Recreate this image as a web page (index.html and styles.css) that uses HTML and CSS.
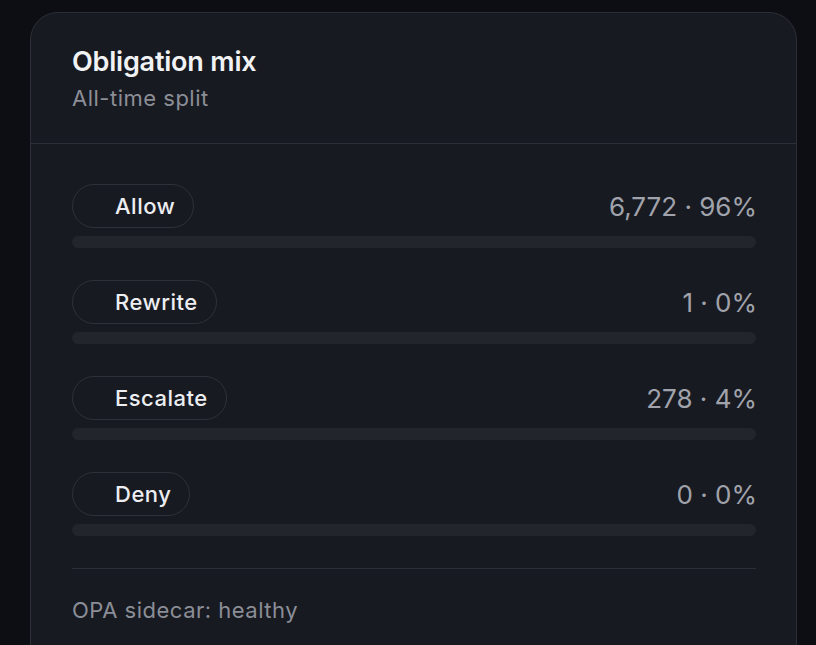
FILE: index.html
```html
<!DOCTYPE html>
<html lang="en">
<head>
  <meta charset="UTF-8" />
  <meta name="viewport" content="width=device-width, initial-scale=1.0"/>
  <title>Obligation mix</title>
  <link rel="stylesheet" href="styles.css">
</head>
<body>
  <div class="card">
    <div class="card-head">
      <h2>Obligation mix</h2>
      <p class="sub">All-time split</p>
    </div>
    <div class="card-body">
      <div class="mix-row">
        <div class="mix-top">
          <span class="pill"><span class="dot"></span>Allow</span>
          <span class="value">6,772 · 96%</span>
        </div>
        <div class="track"><div class="fill" style="width: 96%"></div></div>
      </div>
      <div class="mix-row">
        <div class="mix-top">
          <span class="pill"><span class="dot"></span>Rewrite</span>
          <span class="value">1 · 0%</span>
        </div>
        <div class="track"><div class="fill" style="width: 0%"></div></div>
      </div>
      <div class="mix-row">
        <div class="mix-top">
          <span class="pill"><span class="dot"></span>Escalate</span>
          <span class="value">278 · 4%</span>
        </div>
        <div class="track"><div class="fill" style="width: 4%"></div></div>
      </div>
      <div class="mix-row">
        <div class="mix-top">
          <span class="pill"><span class="dot"></span>Deny</span>
          <span class="value">0 · 0%</span>
        </div>
        <div class="track"><div class="fill" style="width: 0%"></div></div>
      </div>
      <div class="foot">OPA sidecar: healthy</div>
    </div>
  </div>
</body>
</html>
```

FILE: styles.css
```css
body {
  font-family: Inter, "Noto Sans", sans-serif;
  background: #0c0e13;
  margin: 0;
  padding: 12px 0 0 30px;
  overflow: hidden;
}
.card {
  width: 767px;
  box-sizing: border-box;
  background: #181a21;
  border: 1px solid #2c2f37;
  border-radius: 28px;
  min-height: 700px;
}
.card-head {
  padding: 32px 41px 31px;
  border-bottom: 1px solid #2c2f37;
}
.card-head h2 {
  margin: 0;
  font-size: 27px;
  line-height: 34px;
  font-weight: 600;
  color: #f1f2f4;
  letter-spacing: -0.2px;
}
.sub {
  margin: 5px 0 0;
  font-size: 22px;
  line-height: 28px;
  color: #8b8e97;
  letter-spacing: 0.5px;
}
.card-body { padding: 40px 40px 0 41px; }
.mix-row { margin-bottom: 32px; }
.mix-row:last-of-type { margin-bottom: 33px; }
.mix-top {
  display: flex;
  align-items: center;
  justify-content: space-between;
  margin-bottom: 8px;
}
.pill {
  display: inline-flex;
  align-items: center;
  gap: 18px;
  height: 44px;
  box-sizing: border-box;
  padding: 0 18px 0 14px;
  border: 1.5px solid #2e3139;
  border-radius: 22px;
  font-size: 22px;
  font-weight: 500;
  color: #eceef1;
  letter-spacing: 0.5px;
}
.dot { width: 10px; height: 10px; border-radius: 50%; background: transparent; }
.value {
  font-size: 26px;
  font-weight: 400;
  color: #a0a3ab;
  margin-right: -1px;
}
.track {
  height: 12px;
  border-radius: 6px;
  background: #22252c;
  overflow: hidden;
}
.fill { height: 100%; background: transparent; }
.foot {
  border-top: 1px solid #2c2f37;
  padding-top: 27px;
  font-size: 22px;
  line-height: 28px;
  color: #8b8e97;
  letter-spacing: 0.5px;
}
```
